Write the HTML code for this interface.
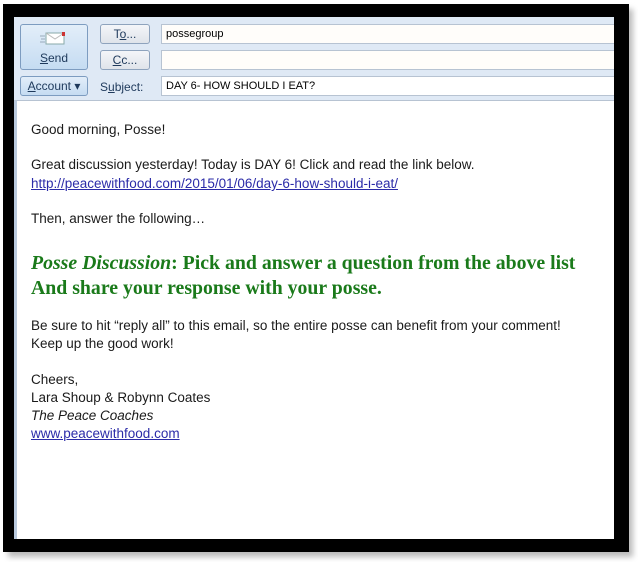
<!DOCTYPE html>
<html><head><meta charset="utf-8"><style>
*{margin:0;padding:0;box-sizing:border-box}
body{width:638px;height:562px;background:#fff;position:relative;overflow:hidden;font-family:"Liberation Sans",sans-serif}
.shadow{position:absolute;left:8px;top:9px;width:625px;height:548px;background:#bbb;filter:blur(3px)}
.frame{position:absolute;left:3px;top:4px;width:626px;height:548px;background:#000}
.win{position:absolute;left:14px;top:17px;width:600px;height:522px;background:#dfe9f5}
.btn{position:absolute;border:1px solid #8ea3bd;border-radius:3px;background:linear-gradient(#f4f6f9,#dfe4ea);font-size:12px;color:#1e395b;text-align:center}
.field{position:absolute;left:147px;width:453px;height:20px;background:#fffdfa;border:1px solid #b7c3d2;border-right:none;font-size:11px;color:#000;padding:3px 4px;line-height:13px}
.body{position:absolute;left:14px;top:100px;width:600px;height:439px;background:#fff;border-left:3px solid #b9c9dd;border-top:1px solid #b7c3d2}
.l{position:absolute;left:31px;font-size:13.5px;line-height:18px;white-space:nowrap;color:#1a1a1a}
a{color:#2b2ba8;text-decoration:underline}
.g{position:absolute;left:31px;font-family:"Liberation Serif",serif;font-weight:bold;font-size:19.8px;color:#1a7a1a;white-space:nowrap;line-height:22px}
</style></head><body>
<div class="shadow"></div>
<div class="frame"></div>
<div class="win">
 <div class="btn" style="left:6px;top:7px;width:68px;height:46px;background:linear-gradient(#e3eef9,#c5dcf2);border-color:#7d9cc0">
  <svg width="30" height="14" viewBox="0 0 30 14" style="position:absolute;left:19px;top:6px"><rect x="6" y="2" width="18" height="11" fill="#fff" stroke="#8aa" /><path d="M6 2 L15 8 L24 2" fill="none" stroke="#bbb"/><rect x="22" y="1" width="3" height="4" fill="#c33"/><path d="M0 5h5M1 8h4M0 11h5" stroke="#9ab" /></svg>
  <div style="position:absolute;top:26px;width:100%;font-size:12px"><u>S</u>end</div>
 </div>
 <div class="btn" style="left:86px;top:7px;width:50px;height:20px;line-height:18px">T<u>o</u>...</div>
 <div class="btn" style="left:86px;top:33px;width:50px;height:20px;line-height:18px"><u>C</u>c...</div>
 <div class="btn" style="left:6px;top:59px;width:68px;height:20px;line-height:18px;background:linear-gradient(#e3eef9,#c5dcf2);border-color:#7d9cc0"><u>A</u>ccount ▾</div>
 <div style="position:absolute;left:86px;top:63px;font-size:12px;color:#1e395b">S<u>u</u>bject:</div>
 <div class="field" style="top:7px">possegroup</div>
 <div class="field" style="top:33px"></div>
 <div class="field" style="top:59px;background:#fff">DAY 6- HOW SHOULD I EAT?</div>
</div>
<div class="body"></div>
<div class="l" style="top:121px">Good morning, Posse!</div>
<div class="l" style="top:156px">Great discussion yesterday! Today is DAY 6! Click and read the link below.</div>
<div class="l" style="top:175px"><a>http://peacewithfood.com/2015/01/06/day-6-how-should-i-eat/</a></div>
<div class="l" style="top:210px">Then, answer the following…</div>
<div class="g" style="top:252px"><i>Posse Discussion</i>: Pick and answer a question from the above list</div>
<div class="g" style="top:277px">And share your response with your posse.</div>
<div class="l" style="top:317px">Be sure to hit “reply all” to this email, so the entire posse can benefit from your comment!</div>
<div class="l" style="top:335px">Keep up the good work!</div>
<div class="l" style="top:371px">Cheers,</div>
<div class="l" style="top:389px">Lara Shoup &amp; Robynn Coates</div>
<div class="l" style="top:407px"><i>The Peace Coaches</i></div>
<div class="l" style="top:425px"><a>www.peacewithfood.com</a></div>
</body></html>
